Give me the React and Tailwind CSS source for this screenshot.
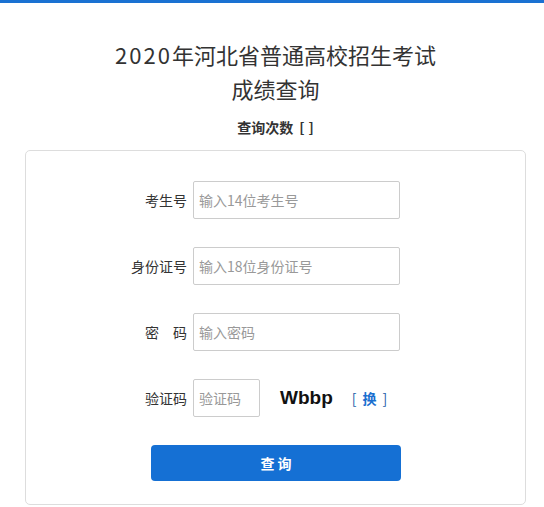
import React from 'react';

const font = { fontFamily: '"Noto Sans CJK SC", "Liberation Sans", sans-serif' };

function Field({ label, placeholder, narrow }) {
  return (
    <div className="flex h-[38px] items-center">
      <label className="mr-[6px] w-[80px] text-right text-[14px] text-[#333]">{label}</label>
      <input
        type="text"
        placeholder={placeholder}
        className={`h-[38px] ${narrow ? 'w-[67px]' : 'w-[207px]'} rounded-[2px] border border-[#ccc] bg-white px-[5px] text-[14px] text-[#333] outline-none placeholder:text-[#999]`}
      />
    </div>
  );
}

export default function App() {
  return (
    <div className="min-h-[507px] overflow-hidden bg-white" style={font}>
      {/* top bar */}
      <div className="h-[3px] bg-[#1a71d2]" />

      <div className="w-[551px]">
        <div className="mt-[34px] text-center text-[22px] leading-[34px] text-[#333]">
          <div>
            <span className="tracking-[2px]">2020</span>年河北省普通高校招生考试
          </div>
          <div>成绩查询</div>
        </div>
        <div className="mt-[12px] flex justify-center text-[14px] font-bold leading-[20px] text-[#333]">
          <span>查询次数</span>
          <span className="ml-[6px]">[</span>
          <span className="ml-[4px]">]</span>
        </div>

        <div className="mx-[25px] mt-[13px] rounded-[5px] border border-[#ddd] pb-[23px] pt-[30px]">
          <div className="flex flex-col gap-[28px] pl-[81px]">
            <Field label="考生号" placeholder="输入14位考生号" />
            <Field label="身份证号" placeholder="输入18位身份证号" />
            <Field label="密　码" placeholder="输入密码" />
            <div className="flex items-center">
              <Field label="验证码" placeholder="验证码" narrow />
              <span
                className="ml-[20px] text-[19px] font-bold text-[#111]"
                style={{ fontFamily: '"Liberation Sans", sans-serif' }}
              >
                Wbbp
              </span>
              <span className="ml-[19px] flex items-center text-[14px] text-[#1d5ea8]">
                <span>[</span>
                <span className="ml-[6px] font-bold text-[#1a6fcf]">换</span>
                <span className="ml-[6px]">]</span>
              </span>
            </div>
          </div>
          <div className="mt-[28px] pl-[125px]">
            <button className="h-[36px] w-[250px] rounded-[4px] bg-[#1570d4] text-[14px] font-bold text-white">
              查 询
            </button>
          </div>
        </div>
      </div>
    </div>
  );
}
